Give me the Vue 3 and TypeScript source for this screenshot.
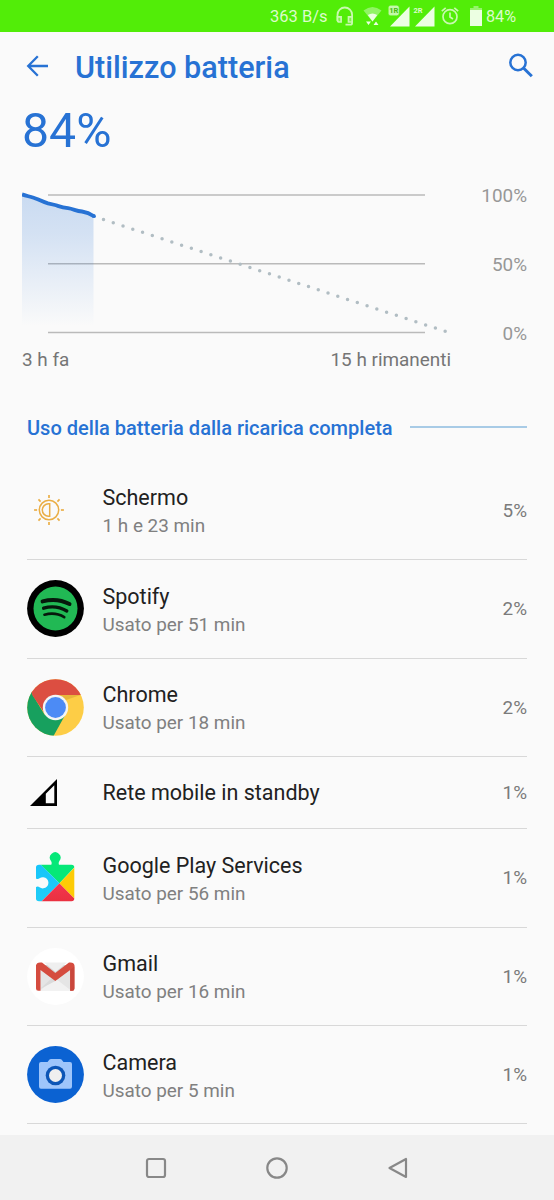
<script setup lang="ts">
type IconName = 'screen' | 'spotify' | 'chrome' | 'cell' | 'play' | 'gmail' | 'camera'

interface UsageRow {
  icon: IconName
  name: string
  detail?: string
  percent: string
}

const rows: UsageRow[] = [
  { icon: 'screen', name: 'Schermo', detail: '1 h e 23 min', percent: '5%' },
  { icon: 'spotify', name: 'Spotify', detail: 'Usato per 51 min', percent: '2%' },
  { icon: 'chrome', name: 'Chrome', detail: 'Usato per 18 min', percent: '2%' },
  { icon: 'cell', name: 'Rete mobile in standby', percent: '1%' },
  { icon: 'play', name: 'Google Play Services', detail: 'Usato per 56 min', percent: '1%' },
  { icon: 'gmail', name: 'Gmail', detail: 'Usato per 16 min', percent: '1%' },
  { icon: 'camera', name: 'Camera', detail: 'Usato per 5 min', percent: '1%' },
]

const rayAngles = [0, 45, 90, 135, 180, 225, 270, 315]
const levels = ['100%', '50%', '0%']
</script>

<template>
  <div class="screen">
    <div class="status">
      <span class="speed">363 B/s</span>
      <svg class="headset" width="18" height="20" viewBox="0 0 18 20">
        <path d="M1.500 15V8.800a7.300 7.300 0 0 1 14.600 0v8.200q0 1.700-1.700 1.700H9.500" fill="none" stroke="#c9f9b0" stroke-width="1.800" />
        <path d="M1.500 10.800h3.600v5.200h-1.600q-2 0-2-2zM12.500 10.800h3.600v5.200h-3.600z" fill="#7df248" stroke="#c9f9b0" stroke-width="1.700" />
      </svg>
      <svg class="wifi" width="20" height="20" viewBox="0 0 20 20">
        <path d="M0.500 4.500Q9.500-2.500 18.500 4.500L9.500 15.500z" fill="#91f465" />
        <path d="M4.800 9Q9.500 6 14.200 9L9.500 15.500z" fill="#ecffe2" />
        <path d="M3 15.500h5l-2.500 3.500zM10.500 19h5L13 15.500z" fill="#ecffe2" />
      </svg>
      <svg class="sim" width="22" height="22" viewBox="0 0 22 22">
        <path d="M21.500 1.500V21.500H2z" fill="#ecffe2" />
        <rect x=".2" y=".2" width="11" height="10.600" rx="2.500" fill="#c5f9aa" stroke="#52ed08" stroke-width=".6" />
        <text x="1.200" y="8.300" class="simtag dark">1R</text>
      </svg>
      <svg class="sim second" width="22" height="22" viewBox="0 0 22 22">
        <path d="M21.500 1.500V21.500H2z" fill="#ecffe2" />
        <path d="M0 0h10v9.500H0z" fill="#52ed08" />
        <text x=".5" y="8" class="simtag">2R</text>
      </svg>
      <svg class="alarm" width="18" height="18" viewBox="0 0 18 18" fill="none" stroke="#c9f9b0" stroke-width="1.700">
        <circle cx="9" cy="9.700" r="7" />
        <path d="M9 5.500v4.500l3 2M.8 4.200L4.700.9M17.200 4.200L13.300.9" />
      </svg>
      <svg class="battery" width="12" height="20" viewBox="0 0 12 20">
        <path d="M3.500 0h5v2h3.500v3H0V2h3.500z" fill="#96f46c" />
        <path d="M0 4h12v16H0z" fill="#ecffe2" />
      </svg>
      <span class="charge">84%</span>
    </div>

    <header class="appbar">
      <svg class="back" width="22" height="22" viewBox="0 0 22 22">
        <path d="M11.800 1.200L2.200 11l9.600 9.800M2.200 11H22.500" fill="none" stroke="#2772d4" stroke-width="2.300" />
      </svg>
      <h1>Utilizzo batteria</h1>
      <svg class="search" width="25" height="25" viewBox="0 0 25 25">
        <circle cx="10" cy="9.500" r="7.700" fill="none" stroke="#2772d4" stroke-width="2.500" />
        <path d="M15.500 15l8.300 8.300" stroke="#2772d4" stroke-width="3" />
      </svg>
    </header>

    <div class="level">84%</div>

    <section class="chart">
      <svg class="plot" width="430" height="150" viewBox="0 0 430 150">
        <defs>
          <linearGradient id="charge-fill" x1="0" y1="0" x2="0" y2="1">
            <stop offset="0" stop-color="#2772d4" stop-opacity=".23" />
            <stop offset=".3" stop-color="#2772d4" stop-opacity=".18" />
            <stop offset="1" stop-color="#2772d4" stop-opacity="0" />
          </linearGradient>
        </defs>
        <path d="M26 10H403M26 78.800H403M26 147.500H403" stroke="#bababa" stroke-width="1.400" />
        <path d="M0 9L14 13.500L25 18L38 21.500L50 24.500L58 26.500L71.500 31V141H0z" fill="url(#charge-fill)" />
        <path d="M81.500 34.600L423.200 146.300" stroke="#b1bdc3" stroke-width="3.500" stroke-linecap="round" stroke-dasharray="0 10.270" />
        <path d="M0 9.400C5 11 11 12.500 15 14C19 15.700 22 17.300 26 18.400L33 20C38 21.500 40 22.400 46 23.200C52 24.200 54 25.900 60 26.500C66 27.300 68 28.500 72 31.200" fill="none" stroke="#2772d4" stroke-width="3.800" />
        <circle cx="72" cy="31.200" r="1.900" fill="#2772d4" />
      </svg>
      <div class="levels">
        <span v-for="label in levels" :key="label">{{ label }}</span>
      </div>
    </section>
    <div class="times">
      <span>3 h fa</span>
      <span>15 h rimanenti</span>
    </div>

    <div class="heading">
      <h2>Uso della batteria dalla ricarica completa</h2>
      <i></i>
    </div>

    <ul class="list">
      <li v-for="row in rows" :key="row.name" :class="{ short: !row.detail }">
        <div class="icon">
          <svg v-if="row.icon === 'screen'" width="32" height="32" viewBox="-16 -16 32 32" class="small sun" fill="none" stroke="#eaae46" stroke-width="1.500">
            <circle r="9.700" />
            <path d="M.7-6.200V6.200H-.5A6.200 6.200 0 0 1-.5-6.200z" />
            <path v-for="angle in rayAngles" :key="angle" d="M11.900 0H14.900" stroke-width="1.700" :transform="`rotate(${angle})`" />
          </svg>

          <svg v-else-if="row.icon === 'spotify'" width="57" height="57" viewBox="0 0 57 57">
            <circle cx="28.500" cy="28.500" r="28.400" />
            <circle cx="28.500" cy="28.500" r="22" fill="#21b954" />
            <g fill="none" stroke="#06180c" stroke-linecap="round">
              <path d="M15.600 21.400Q30 17.600 42.500 24" stroke-width="4" />
              <path d="M16.600 28.200Q29 24.600 39.800 31" stroke-width="3.300" />
              <path d="M17.500 34.700Q28.500 31.800 37.200 37.200" stroke-width="2.700" />
            </g>
          </svg>

          <svg v-else-if="row.icon === 'chrome'" width="57" height="57" viewBox="0 0 57 57">
            <defs>
              <clipPath id="chrome-disc"><circle cx="28.500" cy="28.500" r="28.300" /></clipPath>
              <linearGradient id="chrome-red" x1="0" y1="0" x2="0" y2="1"><stop offset=".75" stop-color="#dc4e41" /><stop offset="1" stop-color="#c44135" /></linearGradient>
            </defs>
            <g clip-path="url(#chrome-disc)">
              <path d="M0 0H57V57H0z" fill="#fdcd46" />
              <path d="M0 0L5.500 15.500L17.500 35.500L28.500 41L39 34.500L26.500 57H0z" fill="#17a05e" />
              <path d="M0 0H57V16H28.500L17.500 34L5.500 16.500z" fill="url(#chrome-red)" />
              <path d="M28.500 16H53.500L39 21z" fill="#e8b63b" />
            </g>
            <circle cx="28.500" cy="28.500" r="12.700" fill="#f3f5f4" />
            <circle cx="28.500" cy="28.500" r="10.400" fill="#4c8bf5" />
          </svg>

          <svg v-else-if="row.icon === 'cell'" class="small cell" width="27" height="27" viewBox="0 0 27 27">
            <path fill-rule="evenodd" d="M27 0V27H0zM24.300 6.300L15.800 14.800V24.300H24.300z" />
          </svg>

          <svg v-else-if="row.icon === 'play'" width="57" height="57" viewBox="0 0 57 57">
            <defs>
              <clipPath id="puzzle"><path d="M11 15.700H24.300Q25.200 13.700 24 11.900A5.300 5.300 0 1 1 32.400 11.900Q31.200 13.700 32 15.700H44.500Q47.300 15.700 47.300 18.500V49.500Q47.300 52.300 44.500 52.300H12Q9 52.300 9 49.500V38Q11 37 12.500 38.300A5.600 5.600 0 1 0 12.500 29.300Q11 30.600 9 29.500V18.500Q9 15.700 12 15.700z" /></clipPath>
              <linearGradient id="play-blue" x1="0" y1="0" x2="0" y2="1"><stop stop-color="#16c4fa" /><stop offset="1" stop-color="#20cdf7" /></linearGradient>
              <linearGradient id="play-red" x1="0" y1="0" x2="0" y2="1"><stop stop-color="#f43650" /><stop offset="1" stop-color="#e9303e" /></linearGradient>
            </defs>
            <g clip-path="url(#puzzle)">
              <path d="M14 0H50V15.700L32.500 34.300L13.500 15.700z" fill="#05e878" />
              <path d="M8 14H12L32.500 34.300L14 53H8z" fill="url(#play-blue)" />
              <path d="M14 53L32.500 34.300L48 50V54H13z" fill="url(#play-red)" />
              <path d="M48 18L32.500 34.300L48 50z" fill="#fdcb05" />
            </g>
          </svg>

          <svg v-else-if="row.icon === 'gmail'" width="57" height="57" viewBox="0 0 57 57">
            <circle cx="28.500" cy="28.500" r="28.400" fill="#fff" />
            <path d="M13 17H44V42.500H13z" fill="#e5e5e5" />
            <path d="M13 20L28.500 33L44 20V17H13z" fill="#d3d3d3" />
            <path d="M17 14.500H40L28.500 24z" fill="#efefef" />
            <path d="M13 42.500L28.500 30.500L44 42.500z" fill="#f1f1f1" />
            <path d="M28.500 33L25 30L13 41z" fill="#dadada" />
            <path d="M9 17.500V40.500Q9 42.800 11.300 42.800H13.500V22L28.300 33L43.200 22V42.800H45.200Q47.500 42.800 47.500 40.500V17.500Q47 14.500 43.500 14.500H42L28.300 25L15 14.500H13Q9.500 14.500 9 17.500z" fill="#d54c3f" />
            <path d="M43.200 22L47.300 18.500V40.500Q47.500 42.800 45.200 42.800H43.200z" fill="#c9473c" />
          </svg>

          <svg v-else width="57" height="57" viewBox="0 0 57 57">
            <circle cx="28.500" cy="28.500" r="28.400" fill="#0b62d2" />
            <path d="M14 16H20.500L22.500 13.600Q23 13 24 13H33Q34 13 34.500 13.600L36.500 16H43Q45 16 45 18V40.500Q45 42.700 43 42.700H14Q12 42.700 12 40.500V18Q12 16 14 16z" fill="#9ec5fb" />
            <circle cx="28.500" cy="29.500" r="9.800" fill="#0c55b6" />
            <circle cx="28.500" cy="29.500" r="6.500" fill="#efefef" />
          </svg>
        </div>
        <div class="text">
          <div class="name">{{ row.name }}</div>
          <div v-if="row.detail" class="detail">{{ row.detail }}</div>
        </div>
        <span class="pct">{{ row.percent }}</span>
      </li>
    </ul>

    <nav class="navbar">
      <svg width="22" height="22" viewBox="0 0 22 22"><rect x="2" y="2" width="18" height="18" rx="2" /></svg>
      <svg width="22" height="22" viewBox="0 0 22 22"><circle cx="11" cy="11" r="9.700" /></svg>
      <svg width="22" height="22" viewBox="0 0 22 22"><path d="M19 2V20L2.500 11z" stroke-linejoin="round" /></svg>
    </nav>
  </div>
</template>

<style>
body {
  margin: 0;
  background: #fafafa;
}
</style>

<style scoped>
.screen {
  width: 554px;
  height: 1200px;
  overflow: hidden;
  display: flex;
  flex-direction: column;
  background: #fafafa;
  font-family: Roboto, sans-serif;
  color: #212121;
}
svg {
  display: block;
  flex: none;
}
.status {
  height: 32px;
  flex: none;
  display: flex;
  align-items: center;
  padding-left: 270px;
  background: #52ed08;
  color: #dcfccb;
  font-size: 16.500px;
  line-height: 32px;
  white-space: nowrap;
}
.speed {
  width: 66px;
  padding-top: 2px;
}
.wifi {
  margin-left: 9px;
}
.sim {
  margin: -1px 0 0 5px;
}
.sim.second {
  margin-left: 2.500px;
}
.simtag {
  font: 700 7.500px Roboto, sans-serif;
  fill: #dcfccb;
}
.simtag.dark {
  fill: #46b912;
}
.alarm {
  margin-left: 6.500px;
}
.battery {
  margin-left: 10.500px;
}
.charge {
  margin-left: 4.500px;
  padding-top: 2px;
  font-size: 16.200px;
}
.appbar {
  height: 72px;
  flex: none;
  display: flex;
  align-items: center;
  box-sizing: border-box;
  padding: 0 21px 4px 26px;
  color: #2772d4;
}
h1 {
  flex: 1;
  margin: 3px 0 0 27px;
  font-size: 30.600px;
  line-height: 34px;
  font-weight: 500;
}
.search {
  margin-top: -2px;
}
.level {
  flex: none;
  height: 52px;
  padding: 1px 0 0 22px;
  box-sizing: border-box;
  font-size: 48.200px;
  line-height: 52px;
  color: #2772d4;
}
.chart {
  flex: none;
  display: flex;
  justify-content: space-between;
  height: 150px;
  margin: 29px 27px 0 22px;
}
.levels {
  display: flex;
  flex-direction: column;
  justify-content: space-between;
  height: 160px;
  text-align: right;
  font-size: 18.900px;
  line-height: 22px;
  color: #979797;
}
.times {
  flex: none;
  display: flex;
  justify-content: space-between;
  margin: 14px 103px 0 22px;
  font-size: 18.900px;
  line-height: 22px;
  color: #757575;
}
.heading {
  flex: none;
  display: flex;
  align-items: center;
  gap: 17px;
  height: 36px;
  margin: 39px 27px 0;
}
h2 {
  margin: 0;
  font-size: 20.050px;
  line-height: 22px;
  font-weight: 500;
  color: #2772d4;
  white-space: nowrap;
}
.heading i {
  flex: 1;
  height: 1.500px;
  margin-top: -2px;
  background: #a8cbe6;
}
.list {
  flex: none;
  list-style: none;
  margin: 15.800px 27px 0;
  padding: 0;
}
.list li {
  display: flex;
  align-items: center;
  box-sizing: border-box;
  height: 98.400px;
  border-bottom: 1px solid #d8d8d8;
}
.list li.short {
  height: 72.200px;
}
.icon {
  width: 75.500px;
  flex: none;
}
.small.sun {
  margin-left: 6px;
}
.small.cell {
  margin-left: 3px;
}
.text {
  flex: 1;
  padding-top: 3px;
}
.short .text {
  padding-top: 1px;
}
.name {
  font-size: 21.500px;
  line-height: 28px;
}
.detail {
  font-size: 18.900px;
  line-height: 27px;
  color: #808080;
}
.pct {
  padding-top: 1px;
  font-size: 18.900px;
  line-height: 22px;
  color: #7b7b7b;
}
.navbar {
  flex: none;
  height: 65px;
  margin-top: auto;
  display: flex;
  justify-content: center;
  align-items: center;
  gap: 99px;
  background: #f1f1f1;
}
.navbar svg {
  fill: none;
  stroke: #888;
  stroke-width: 2.200px;
}
</style>
